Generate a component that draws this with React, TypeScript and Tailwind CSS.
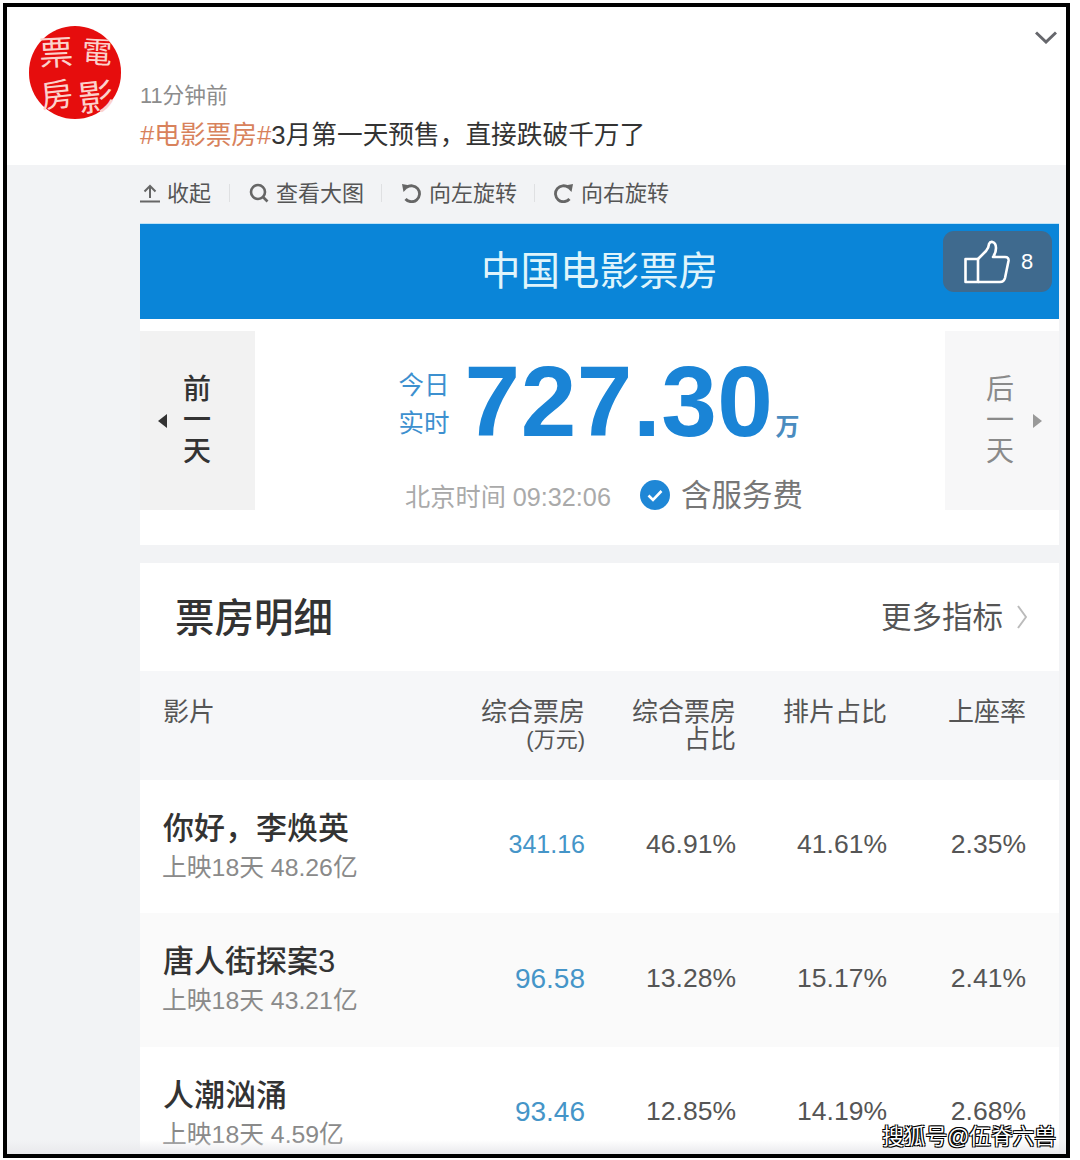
const FONT = "font-['Liberation_Sans','Noto_Sans_CJK_SC',sans-serif]";
const COLS = 'grid-cols-[223px_199px_151px_151px_139px]';

const films = [
  { name: '你好，李焕英', info: '上映18天 48.26亿', gross: '341.16', grossSize: 'text-[25px]', share: '46.91%', shows: '41.61%', seats: '2.35%', bg: 'bg-white' },
  { name: '唐人街探案3', info: '上映18天 43.21亿', gross: '96.58', grossSize: 'text-[28px]', share: '13.28%', shows: '15.17%', seats: '2.41%', bg: 'bg-[#fafafa]' },
  { name: '人潮汹涌', info: '上映18天 4.59亿', gross: '93.46', grossSize: 'text-[28px]', share: '12.85%', shows: '14.19%', seats: '2.68%', bg: 'bg-white' },
];

function Sep() {
  return <div className="w-px h-[18px] bg-[#dfe0e2] ml-[17px] mr-[19px]" />;
}

function RotateIcon({ className }: { className?: string }) {
  return (
    <svg className={className} width="20" height="20" viewBox="0 0 20 20" fill="none">
      <path d="M5.5 4.5A8 8 0 1 1 4.5 16" stroke="#666" strokeWidth="2.8" />
      <path d="M1 1L9 2.5L2.5 9Z" fill="#666" />
    </svg>
  );
}

function ThumbIcon() {
  return (
    <svg width="46" height="44" viewBox="0 0 46 44" fill="none" stroke="#fff" strokeWidth="2.6" strokeLinejoin="round">
      <path d="M1.5 19H14V42H1.5Z" />
      <path d="M14 19L22 11Q25 7 25 4Q26 1.5 28.5 2Q32 3 32 8Q32 13 29 17H41Q45 17 44.5 21L41 38Q40 42 36 42H14" />
    </svg>
  );
}

export default function App() {
  return (
    <div className={`w-[1080px] h-[1160px] bg-white pt-[3px] pl-[3px] overflow-hidden ${FONT}`}>
      <div className="relative w-[1067px] h-[1155px] border-4 border-black flex flex-col overflow-hidden">
        {/* post header */}
        <div className="h-[158px] shrink-0 flex bg-white pl-[22px] pr-[9px]">
          <div className="mt-[19px] w-[92px] h-[93px] rounded-full bg-[#e60d0d] grid grid-cols-2 grid-rows-[50px_43px] text-[#fbd2cc] font-['Noto_Sans_CJK_TC',sans-serif] leading-none shrink-0">
            <span className="text-[34px] pl-[10px] pt-[8px] -rotate-3">票</span>
            <span className="text-[30px] pl-[7px] pt-[9px] rotate-3">電</span>
            <span className="text-[32px] pl-[12px] pt-[1px] -rotate-6">房</span>
            <span className="text-[36px] pl-[3px] -rotate-6">影</span>
          </div>
          <div className="ml-[19px] pt-[76px] flex-1">
            <div className="text-[21.7px] leading-[26px] text-[#8c8c8c]">11分钟前</div>
            <div className="mt-[11px] text-[25.7px] leading-[30px] text-[#333] whitespace-nowrap">
              <span className="text-[#d8825c]">#电影票房#</span>3月第一天预售，直接跌破千万了
            </div>
          </div>
          <svg className="mt-[24px]" width="22" height="13" viewBox="0 0 22 13" fill="none" stroke="#66676c" strokeWidth="3">
            <path d="M1 1.5L11 11L21 1.5" />
          </svg>
        </div>

        {/* expanded picture */}
        <div className="flex-1 min-h-0 bg-[#f2f3f5] pl-[133px] pr-[7px]">
          <div className="h-[58px] pb-[2px] flex items-center text-[22px] text-[#555]">
            <svg width="20" height="20" viewBox="0 0 20 20" fill="none" stroke="#666" strokeWidth="2">
              <path d="M10 15V3M4.5 8.5L10 3L15.5 8.5M0 18.5H20" />
            </svg>
            <span className="ml-[7px] mr-[1px]">收起</span>
            <Sep />
            <svg width="20" height="20" viewBox="0 0 20 20" fill="none" stroke="#666" strokeWidth="2.6">
              <circle cx="9" cy="9" r="7" />
              <path d="M13.5 13.5L18.5 18.5" />
            </svg>
            <span className="ml-[7px]">查看大图</span>
            <Sep />
            <RotateIcon />
            <span className="ml-[8px]">向左旋转</span>
            <Sep />
            <RotateIcon className="-scale-x-100" />
            <span className="ml-[7px]">向右旋转</span>
          </div>

          <div className="border-t border-[#bfe3f7]">
            <div className="relative h-[95px] pb-[2px] bg-[#0a85d8] flex items-center justify-center">
              <span className="text-[39.5px] leading-[50px] text-[#dff4fb]">中国电影票房</span>
              <div className="absolute right-[7px] top-[7px] w-[109px] h-[61px] rounded-[11px] bg-[#3f6a8e] flex items-center pl-[21px]">
                <ThumbIcon />
                <span className="ml-[11px] text-[22px] leading-none text-white">8</span>
              </div>
            </div>

            {/* today's total */}
            <div className="bg-white h-[226px] pt-[12px] flex items-start">
              <div className="w-[115px] h-[179px] bg-[#f2f2f2] flex items-center pl-[18px]">
                <div className="w-0 h-0 border-y-[7px] border-y-transparent border-r-[9px] border-r-[#333]" />
                <div className="ml-[16px] w-[28px] flex flex-col text-[28px] leading-[31px] font-medium text-[#333]">
                  <span>前</span>
                  <span>一</span>
                  <span>天</span>
                </div>
              </div>
              <div className="flex-1 flex flex-col items-center">
                <div className="flex pt-[20px] -ml-[2px]">
                  <div className="w-[51px] pt-[15px] text-[25.5px] leading-[38px] text-[#3d90cf]">
                    <div>今日</div>
                    <div>实时</div>
                  </div>
                  <div className="ml-[15px] text-[100px] leading-[100px] font-bold tracking-[0.5px] text-[#1a84d6]">727.30</div>
                  <div className="ml-[2px] pt-[61px] text-[24px] leading-[30px] font-bold text-[#4a8cbf]">万</div>
                </div>
                <div className="flex items-center ml-[8px] mt-[24px]">
                  <span className="text-[25.2px] leading-[34px] pt-[3px] text-[#aaa]">北京时间 09:32:06</span>
                  <svg className="ml-[29px]" width="30" height="30" viewBox="0 0 30 30">
                    <circle cx="15" cy="15" r="15" fill="#1f87d6" />
                    <path d="M8.5 15.5L13 20L21.5 11" fill="none" stroke="#fff" strokeWidth="2.6" />
                  </svg>
                  <span className="ml-[11px] text-[30.5px] leading-[40px] text-[#777]">含服务费</span>
                </div>
              </div>
              <div className="w-[114px] h-[179px] bg-[#f7f7f8] flex items-center pl-[41px]">
                <div className="w-[28px] flex flex-col text-[28px] leading-[31px] text-[#8a8a8a]">
                  <span>后</span>
                  <span>一</span>
                  <span>天</span>
                </div>
                <div className="ml-[19px] w-0 h-0 border-y-[7px] border-y-transparent border-l-[9px] border-l-[#999]" />
              </div>
            </div>

            {/* details table */}
            <div className="mt-[18px] bg-white h-[108px] flex items-center justify-between pl-[35px] pr-[32px]">
              <span className="pt-[2px] text-[39.5px] leading-[50px] font-medium text-[#333]">票房明细</span>
              <div className="flex items-center">
                <span className="text-[30.5px] leading-[40px] text-[#555]">更多指标</span>
                <svg className="ml-[14px]" width="10" height="24" viewBox="0 0 10 24" fill="none" stroke="#bbb" strokeWidth="2">
                  <path d="M1 1L9 12L1 23" />
                </svg>
              </div>
            </div>
            <div className={`h-[109px] bg-[#f6f7f9] pl-[23px] pr-[33px] pt-[28px] grid ${COLS} text-[26px] leading-[27px] text-[#555] text-right`}>
              <div className="text-left">影片</div>
              <div>
                综合票房
                <div className="text-[22px]">(万元)</div>
              </div>
              <div>
                综合票房
                <div>占比</div>
              </div>
              <div>排片占比</div>
              <div>上座率</div>
            </div>
            {films.map((f, i) => (
              <div
                key={f.name}
                className={`${f.bg} ${i === 1 ? 'h-[134px]' : 'h-[133px]'} pl-[22px] pr-[33px] grid grid-cols-[224px_199px_151px_151px_139px] items-center text-right text-[26.5px] text-[#555]`}
              >
                <div className="text-left flex flex-col gap-[6px] whitespace-nowrap">
                  <div className="pl-[1px] text-[31px] leading-[36px] font-medium text-[#333]">{f.name}</div>
                  <div className="text-[24.8px] leading-[30px] text-[#8a8a8a]">{f.info}</div>
                </div>
                <div className={`pb-[3px] ${f.grossSize} text-[#4595c8]`}>{f.gross}</div>
                <div className="pb-[3px]">{f.share}</div>
                <div className="pb-[3px]">{f.shows}</div>
                <div className="pb-[3px]">{f.seats}</div>
              </div>
            ))}
          </div>
        </div>

        <div className="absolute left-0 right-0 bottom-0 h-[14px] bg-gradient-to-b from-transparent to-[#e9e9ec]" />
        <div className="absolute right-[10px] bottom-[4px] text-[21.7px] leading-[26px] text-white [text-shadow:1px_1px_0_#000,-1px_-1px_0_#000,1px_-1px_0_#000,-1px_1px_0_#000]">
          搜狐号@伍脊六兽
        </div>
      </div>
    </div>
  );
}
